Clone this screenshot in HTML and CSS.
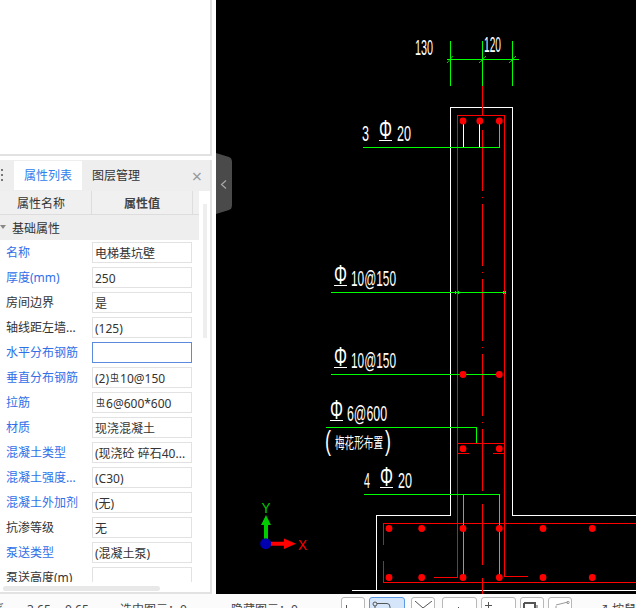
FILE: index.html
```html
<!DOCTYPE html>
<html lang="zh">
<head>
<meta charset="utf-8">
<title>属性列表</title>
<link rel="stylesheet" href="styles.css">
</head>
<body>
<div class="app">
  <div class="main">
    <aside class="side">
      <div class="top-panel"></div>
      <section class="props">
        <div class="tabs">
          <div class="grip"><i></i><i></i><i></i></div>
          <div class="tab active">属性列表</div>
          <div class="tab">图层管理</div>
          <div class="close">×</div>
        </div>
        <div class="prop-body">
          <div class="prop-table">
            <div class="head">
              <div class="head-name">属性名称</div>
              <div class="head-value">属性值</div>
            </div>
            <div class="group"><span class="tri"></span>基础属性</div>
            <div class="row"><div class="lbl blue">名称</div><div class="val">电梯基坑壁</div></div>
            <div class="row"><div class="lbl blue">厚度(mm)</div><div class="val">250</div></div>
            <div class="row"><div class="lbl">房间边界</div><div class="val">是</div></div>
            <div class="row"><div class="lbl">轴线距左墙...</div><div class="val">(125)</div></div>
            <div class="row"><div class="lbl blue">水平分布钢筋</div><div class="val focus"></div></div>
            <div class="row"><div class="lbl blue">垂直分布钢筋</div><div class="val">(2)<span class="bar">虫</span>10@150</div></div>
            <div class="row"><div class="lbl blue">拉筋</div><div class="val"><span class="bar">虫</span>6@600*600</div></div>
            <div class="row"><div class="lbl blue">材质</div><div class="val">现浇混凝土</div></div>
            <div class="row"><div class="lbl blue">混凝土类型</div><div class="val">(现浇砼 碎石40...</div></div>
            <div class="row"><div class="lbl blue">混凝土强度...</div><div class="val">(C30)</div></div>
            <div class="row"><div class="lbl blue">混凝土外加剂</div><div class="val">(无)</div></div>
            <div class="row"><div class="lbl">抗渗等级</div><div class="val">无</div></div>
            <div class="row"><div class="lbl blue">泵送类型</div><div class="val">(混凝土泵)</div></div>
            <div class="row"><div class="lbl">泵送高度(m)</div><div class="val"></div></div>
          </div>
          <div class="vscroll"><div class="vthumb"></div></div>
        </div>
        <div class="hscroll"><div class="hthumb"></div></div>
      </section>
    </aside>
    <div class="canvas">
      <svg class="cad" viewBox="216 0 420 594" width="420" height="594">
        <!-- drawer handle -->
        <path class="handle" d="M216 153 L229 157 Q232 158 232 162 L232 205 Q232 209 229 210 L216 214 Z"/>
        <path class="handle-arrow" d="M226 180.5 L221.5 184.5 L226 188.5"/>

        <!-- wall outline -->
        <path class="white" d="M351.5 590.5 H636 M376.5 590 V515.5 H450.5 V107.5 H512.5 V515.5 H636"/>

        <!-- rebar -->
        <path class="red" d="M434 577.5 H457.5 V115.5 H504.5 V576.5 H528"/>
        <path class="red" d="M457.5 443.5 H504.5 M458 453.5 H469 M493 453.5 H504"/>
        <path class="red" d="M383.5 545 V523.5 H636 M383.5 561 V582.5 H636"/>
        <path class="red" d="M482.5 86 V116 M482.5 130 V191 M482.5 197 V198 M482.5 204 V266 M482.5 272 V273 M482.5 279 V341 M482.5 347 V348 M482.5 354 V416 M482.5 422 V423 M482.5 429 V491 M482.5 504 V565 M482.5 578 V594"/>

        <!-- leaders -->
        <path class="white" d="M463.5 122 V147 M479.5 122 V147"/>
        <path class="green" d="M450.5 41 V86 M482.5 41 V86 M512.5 41 V86 M447 59.5 H519"/>
        <path class="green thin" d="M447 63 L453 56 M479 63 L486 56 M509 63 L516 56"/>
        <path class="green" d="M363 147.5 H499.5 V121"/>
        <path class="green" d="M331 292.5 H505 M455.5 291 V294 M458.5 291 V294 M503.5 291 V294 M505.5 291 V294"/>
        <path class="green" d="M331 374.5 H499"/>
        <path class="green" d="M326 427.5 H476.5 V443"/>
        <path class="green" d="M364 494.5 H499.5 V577 M463.5 494.5 V577"/>

        <!-- dots -->
        <g class="dots">
          <circle cx="463" cy="121" r="3.4"/><circle cx="479.8" cy="121" r="3.4"/><circle cx="499.3" cy="121" r="3.4"/>
          <circle cx="463" cy="374.5" r="3.4"/><circle cx="499.3" cy="374.5" r="3.4"/>
          <circle cx="463" cy="448.7" r="3.4"/><circle cx="499.3" cy="448.7" r="3.4"/>
          <circle cx="389" cy="528.5" r="3.4"/><circle cx="421.7" cy="528.5" r="3.4"/><circle cx="463" cy="528.5" r="3.4"/><circle cx="499.3" cy="528.5" r="3.4"/><circle cx="543" cy="528.5" r="3.4"/><circle cx="592.3" cy="528.5" r="3.4"/>
          <circle cx="389" cy="577.5" r="3.4"/><circle cx="421.7" cy="577.5" r="3.4"/><circle cx="463" cy="577.5" r="3.4"/><circle cx="499.3" cy="577.5" r="3.4"/><circle cx="543" cy="577.5" r="3.4"/><circle cx="592.3" cy="577.5" r="3.4"/>
        </g>

        <!-- annotations -->
        <text class="cad-t" x="415" y="55" textLength="18" lengthAdjust="spacingAndGlyphs">130</text>
        <text class="cad-t" x="484" y="52" textLength="17" lengthAdjust="spacingAndGlyphs">120</text>

        <text class="cad-t" x="362" y="141" textLength="7" lengthAdjust="spacingAndGlyphs">3</text>
        <text class="cad-phi" x="379" y="139" textLength="13" lengthAdjust="spacingAndGlyphs">Φ</text>
        <path class="white" d="M379 140.5 H392"/>
        <text class="cad-t" x="397" y="141" textLength="14" lengthAdjust="spacingAndGlyphs">20</text>

        <text class="cad-phi" x="334" y="284" textLength="13" lengthAdjust="spacingAndGlyphs">Φ</text>
        <path class="white" d="M334 285.5 H347"/>
        <text class="cad-t" x="351" y="286" textLength="45" lengthAdjust="spacingAndGlyphs">10@150</text>

        <text class="cad-phi" x="334" y="366" textLength="13" lengthAdjust="spacingAndGlyphs">Φ</text>
        <path class="white" d="M334 367.5 H347"/>
        <text class="cad-t" x="351" y="368" textLength="45" lengthAdjust="spacingAndGlyphs">10@150</text>

        <text class="cad-phi" x="330" y="419" textLength="13" lengthAdjust="spacingAndGlyphs">Φ</text>
        <path class="white" d="M330 420.5 H343"/>
        <text class="cad-t" x="347" y="421" textLength="40" lengthAdjust="spacingAndGlyphs">6@600</text>

        <text class="cad-par" x="325" y="450" textLength="6" lengthAdjust="spacingAndGlyphs">(</text>
        <text class="cad-cn" x="335" y="448" textLength="48" lengthAdjust="spacingAndGlyphs">梅花形布置</text>
        <text class="cad-par" x="385" y="450" textLength="6" lengthAdjust="spacingAndGlyphs">)</text>

        <text class="cad-t" x="364" y="488" textLength="6" lengthAdjust="spacingAndGlyphs">4</text>
        <text class="cad-phi" x="380" y="486" textLength="13" lengthAdjust="spacingAndGlyphs">Φ</text>
        <path class="white" d="M380 487.5 H393"/>
        <text class="cad-t" x="398" y="488" textLength="14" lengthAdjust="spacingAndGlyphs">20</text>

        <!-- axis gizmo -->
        <path class="axis-y" d="M264 541 V525 H261 L266 515 L271 525 H268 V541 Z"/>
        <path class="axis-x" d="M268 541.7 H284 V538.5 L296 543.7 L284 549 V545.7 H268 Z"/>
        <circle class="axis-o" cx="265.7" cy="543.7" r="5.5"/>
        <text class="axis-ly" x="261.5" y="513" textLength="9" lengthAdjust="spacingAndGlyphs">Y</text>
        <text class="axis-lx" x="298" y="550" textLength="9" lengthAdjust="spacingAndGlyphs">X</text>
      </svg>
    </div>
  </div>
  <footer class="status">
    <span class="st st-a">系</span>
    <span class="st st-b">3.65</span>
    <span class="st st-c">0.65</span>
    <span class="st st-d">选中图元：0</span>
    <span class="st st-e">隐藏图元：0</span>
    <div class="tools">
      <span class="tool w24"><svg width="22" height="12" viewBox="0 0 22 12"><path class="ico" d="M4.5 4 V12"/></svg></span>
      <span class="tool w36 on"><svg width="34" height="12" viewBox="0 0 34 12"><circle class="ico" cx="5" cy="3" r="2"/><path class="ico" d="M7 2.5 H17 Q20 2.5 20 6 V12 M5 5 V12"/></svg></span>
      <span class="tool w24"><svg width="22" height="12" viewBox="0 0 22 12"><path class="ico" d="M3 0 L11 7 L20 0"/></svg></span>
      <span class="tool w35"><svg width="33" height="12" viewBox="0 0 33 12"><path class="ico" d="M11 11 L16 6"/></svg></span>
      <span class="tool w35"><svg width="33" height="12" viewBox="0 0 33 12"><path class="ico" d="M3 4.5 H10 M6.5 1 V9"/></svg></span>
      <span class="tool w24"><svg width="22" height="12" viewBox="0 0 22 12"><path class="ico-dark" d="M3 2 H14 V12 M3 2 V12"/><path class="ico" d="M16 4 V12"/></svg></span>
      <span class="tool w24"><svg width="22" height="12" viewBox="0 0 22 12"><path class="ico-grey" d="M7 5 V12 M7 4 L19 1"/><circle class="ico-grey" cx="19" cy="1.5" r="1.2"/></svg></span>
    </div>
    <span class="st st-f">↗ 按鼠标</span>
  </footer>
</div>
</body>
</html>
```
FILE: styles.css
```css
* { box-sizing: border-box; }
html, body { margin: 0; padding: 0; width: 636px; height: 608px; overflow: hidden; background: #fff; }
body { font: 12px/16px "Noto Sans", "Noto Sans CJK SC", sans-serif; color: #333; }

.app { display: flex; flex-direction: column; width: 636px; height: 608px; overflow: hidden; }
.main { display: flex; height: 594px; flex: none; }

.side { width: 216px; flex: none; display: flex; flex-direction: column; padding-right: 4px; background: #fff; }
.top-panel { height: 156px; flex: none; border-right: 2px solid #e2e2e2; border-bottom: 2px solid #e2e2e2; }
.props { margin-top: 4px; flex: 1; min-height: 0; display: flex; flex-direction: column; border-right: 2px solid #e2e2e2; border-bottom: 2px solid #e2e2e2; }

.tabs { height: 31px; flex: none; display: flex; align-items: stretch; background: #eee; padding-top: 1px; padding-bottom: 1px; }
.grip { width: 14px; display: flex; flex-direction: column; gap: 3px; padding: 8px 0 0 1px; }
.grip i { display: block; width: 2px; height: 2px; background: #777; }
.tab { width: 68px; text-align: center; line-height: 30px; font-size: 12px; color: #333; }
.tab.active { background: #fff; color: #2f80ed; }
.close { margin-left: auto; width: 28px; padding-left: 2px; text-align: center; font-size: 18px; line-height: 30px; color: #999; }

.prop-body { flex: 1; min-height: 0; display: flex; }
.prop-table { width: 199px; flex: none; overflow: hidden; }
.head { height: 24px; display: grid; grid-template-columns: 92px 101px 6px; background: #f0f0f0; border-bottom: 1px solid #ddd; }
.head-name { border-right: 1px solid #ddd; line-height: 25px; padding-left: 17px; }
.head-value { border-right: 1px solid #ddd; line-height: 25px; font-weight: 700; color: #444; padding-left: 32px; }
.group { height: 25px; display: flex; align-items: center; background: #eee; padding: 2px 0 0 12px; position: relative; color: #333; }
.tri { position: absolute; left: 0; top: 10px; width: 0; height: 0; border-left: 3px solid transparent; border-right: 3px solid transparent; border-top: 4px solid #888; }

.row { height: 25px; display: grid; grid-template-columns: 92px 100px; align-items: center; }
.lbl { padding: 1px 0 0 6px; white-space: nowrap; overflow: hidden; line-height: 20px; }
.lbl.blue { color: #2f6fe8; }
.val { height: 21px; border: 1px solid #e2e2e2; padding: 1px 0 0 2px; line-height: 19px; white-space: nowrap; overflow: hidden; }
.val.focus { border-color: #5b8adf; }
.bar { font-size: 9px; line-height: 9px; position: relative; top: -2px; margin: 0 1px; }

.vscroll { flex: 1; }
.vthumb { width: 4px; height: 134px; margin: 13px 0 0 4px; background: #eee; }
.hscroll { flex: none; height: 10px; }
.hthumb { width: 157px; height: 5px; margin: 4px 0 0 3px; border-radius: 3px; background: #e8e8e8; }

.canvas { flex: 1; background: #000; overflow: hidden; }
.cad { display: block; }
.handle { fill: #4a4a4a; }
.handle-arrow { fill: none; stroke: #a8a8a8; stroke-width: 1.2; }
.white, .green, .red { fill: none; stroke-width: 1; shape-rendering: crispEdges; }
.white { stroke: #fff; }
.green { stroke: #0f0; }
.red { stroke: #f00; }
.green.thin { shape-rendering: auto; stroke-width: .8; }
.dots circle { fill: #f00; }
.cad-t { fill: #fff; font-family: "Liberation Sans", sans-serif; font-size: 21.5px; }
.cad-phi { fill: #fff; font-family: "Liberation Sans", sans-serif; font-size: 28px; }
.cad-cn { fill: #fff; font-family: "Noto Sans CJK SC", sans-serif; font-size: 15px; }
.cad-par { fill: #fff; font-family: "Liberation Sans", sans-serif; font-size: 28px; }
.axis-y { fill: #0c0; }
.axis-x { fill: #f00; }
.axis-o { fill: #0000b0; }
.axis-ly { fill: #0c0; font: 15px "Liberation Sans", sans-serif; }
.axis-lx { fill: #f00; font: 15px "Liberation Sans", sans-serif; }

.status { height: 14px; flex: none; display: flex; align-items: flex-start; background: #fbfbfb; overflow: hidden; position: relative; }
.st { display: block; padding-top: 8px; white-space: nowrap; flex: none; color: #444; }
.st-a { width: 27px; margin-left: -7px; margin-right: 7px; }
.st-b { width: 38px; }
.st-c { width: 55px; }
.st-d { width: 111px; }
.st-e { width: 110px; }
.st-f { margin-left: 25px; }
.tools { display: flex; margin-top: 3px; gap: 4px; flex: none; }
.tool { display: block; height: 22px; border: 1px solid #b8b8b8; border-radius: 3px; background: #fff; padding-top: 3px; flex: none; }
.tool.on { background: #d6e6fa; border-color: #5c9ae6; margin-right: 2px; }
.tool.w24 { width: 24px; }
.tool.w35 { width: 35px; }
.tool.w36 { width: 36px; }
.tool:nth-child(3) { margin-right: 3px; }
.tool svg { display: block; }
.ico { fill: none; stroke: #555; stroke-width: 1; }
.ico-dark { fill: none; stroke: #555; stroke-width: 2; }
.ico-grey { fill: none; stroke: #999; stroke-width: 1; }
```
